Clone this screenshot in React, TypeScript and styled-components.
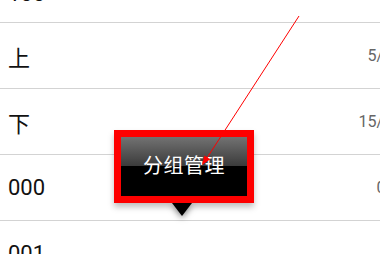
import { FC } from 'react';
import styled, { createGlobalStyle } from 'styled-components';

const GlobalStyle = createGlobalStyle`
  html, body {
    margin: 0;
    padding: 0;
    background: #fff;
    overflow: hidden;
  }
  body {
    font-family: Roboto, "Noto Sans CJK SC", sans-serif;
  }
`;

const StyledScreen = styled.div`
  position: relative;
  width: 380px;
  height: 254px;
  overflow: hidden;
`;

const StyledList = styled.div`
  width: 410px;
  margin-top: -43px;
  display: flex;
  flex-direction: column;
`;

const StyledRow = styled.div`
  display: flex;
  flex-direction: row;
  justify-content: space-between;
  align-items: center;
  height: 66px;
  box-sizing: border-box;
  padding: 0 9px 0 8px;
  border-bottom: 1px solid #d3d3d3;
`;

const StyledName = styled.span<{ $drop?: number }>`
  font-size: 22px;
  color: #111;
  transform: translateY(${p => p.$drop ?? 0}px);
`;

const StyledCount = styled.span`
  font-size: 16px;
  color: #666;
`;

const StyledBubble = styled.div`
  position: absolute;
  left: 114px;
  top: 130px;
  width: 140px;
  height: 73px;
  box-sizing: border-box;
  border: 7px solid #fe0000;
  box-shadow: 0 4px 6px rgba(0, 0, 0, 0.25);
  z-index: 2;
`;

const StyledButton = styled.div`
  display: flex;
  align-items: center;
  justify-content: center;
  height: 100%;
  padding-bottom: 5px;
  box-sizing: border-box;
  background: linear-gradient(#727272 0%, #3a3a3a 50%, #000 50%, #000 100%);
  color: #fff;
  font-family: "Noto Sans CJK SC", sans-serif;
  font-size: 20px;
  letter-spacing: 0.5px;
`;

const StyledPointer = styled.div`
  position: absolute;
  left: 172px;
  top: 203px;
  width: 0;
  height: 0;
  border-left: 10px solid transparent;
  border-right: 10px solid transparent;
  border-top: 13px solid #000;
  filter: drop-shadow(0 2px 3px rgba(0, 0, 0, 0.5));
  z-index: 1;
`;

const StyledMarkup = styled.svg`
  position: absolute;
  left: 0;
  top: 0;
  z-index: 3;
  pointer-events: none;
`;

const rows = [
  { name: '100', count: '', drop: 4 },
  { name: '上', count: '5/20' },
  { name: '下', count: '15/20' },
  { name: '000', count: '0/5' },
  { name: '001', count: '' },
];

const App: FC = () => {
  return (
    <>
      <GlobalStyle />
      <StyledScreen>
        <StyledList>
          {rows.map(r => (
            <StyledRow key={r.name}>
              <StyledName $drop={r.drop}>{r.name}</StyledName>
              <StyledCount>{r.count}</StyledCount>
            </StyledRow>
          ))}
        </StyledList>
        <StyledBubble>
          <StyledButton>分组管理</StyledButton>
        </StyledBubble>
        <StyledPointer />
        <StyledMarkup width={380} height={254}>
          <line x1={299} y1={16} x2={205} y2={161} stroke="#f00" strokeWidth={1} />
          <polygon points="202,165 210.3,159.2 204.4,155.4" fill="#f00" />
        </StyledMarkup>
      </StyledScreen>
    </>
  );
};

export default App;
